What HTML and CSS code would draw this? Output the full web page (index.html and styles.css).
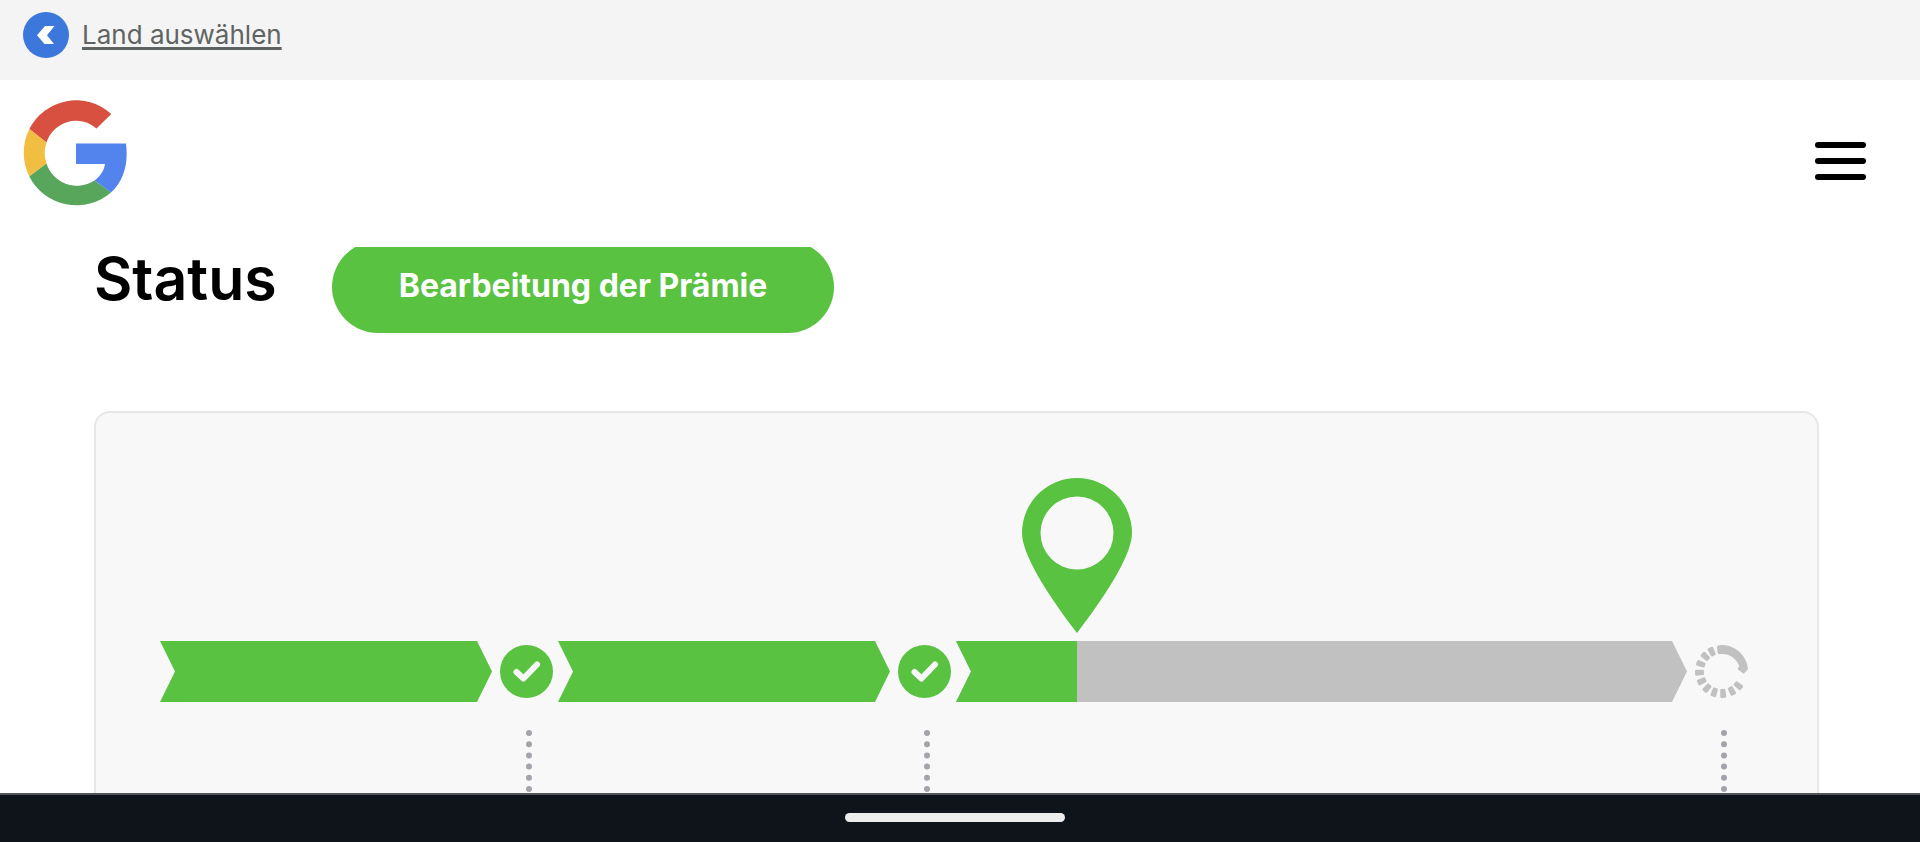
FILE: index.html
```
<!DOCTYPE html>
<html lang="de">
<head>
    <meta charset="UTF-8">
    <meta name="viewport" content="width=device-width, initial-scale=1.0">
    <title>Status</title>
    <link rel="stylesheet" href="styles.css">
</head>
<body>
    <div class="country-bar">
        <a href="#" class="country-link">
            <svg class="back-icon" viewBox="0 0 46 46" aria-hidden="true">
                <circle cx="23" cy="23" r="23" fill="#3c77dc"/>
                <path d="M22 14H31.500L24 23.200L31 32H21.500L14 23.200Z" fill="#fff"/>
            </svg>
            <span>Land auswählen</span>
        </a>
    </div>

    <header class="header">
        <a href="#" class="logo" aria-label="Google">
            <svg viewBox="0 0 104 106" aria-hidden="true">
                <path d="M6.300 29.500A52.500 52.800 0 0 1 88.300 14.500L73.500 29A31 31 0 0 0 23.500 43Z" fill="#d8503f"/>
                <path d="M6.300 29.500L23.500 43A32 32 0 0 0 23.500 64L6.300 77A53.500 53.500 0 0 1 6.300 29.500Z" fill="#f1be42"/>
                <path d="M6.300 77L23.500 64A32 32 0 0 0 71.500 81L88 93A53 53 0 0 1 6.300 77Z" fill="#58a55c"/>
                <path d="M53 44H103C105.500 64 101 81 88 93L71.500 81C77.500 76.500 81 71 82 64.500H53Z" fill="#5383ec"/>
            </svg>
        </a>
        <button type="button" class="menu-button" aria-label="Menü">
            <span></span>
            <span></span>
            <span></span>
        </button>
    </header>

    <main class="content">
        <div class="status-row">
            <h1>Status</h1>
            <span class="status-pill">Bearbeitung der Prämie</span>
        </div>

        <section class="progress-card">
            <div class="progress">
                <div class="segment done"></div>
                <svg class="step-icon" viewBox="0 0 53 53" role="img" aria-label="Erledigt">
                    <circle cx="26.500" cy="26.500" r="26.500" fill="#59c240"/>
                    <path d="M16.500 27L23.500 33.500L37 19.500" fill="none" stroke="#f8f8f8" stroke-width="6" stroke-linecap="round" stroke-linejoin="round"/>
                </svg>
                <div class="segment done next"></div>
                <svg class="step-icon" viewBox="0 0 53 53" role="img" aria-label="Erledigt">
                    <circle cx="26.500" cy="26.500" r="26.500" fill="#59c240"/>
                    <path d="M16.500 27L23.500 33.500L37 19.500" fill="none" stroke="#f8f8f8" stroke-width="6" stroke-linecap="round" stroke-linejoin="round"/>
                </svg>
                <div class="current next">
                    <div class="segment">
                        <div class="fill" style="width: 16.6%"></div>
                    </div>
                    <svg class="pin" style="left: 16.6%" viewBox="0 0 110 155" aria-hidden="true">
                        <path fill-rule="evenodd" d="M55 0A55 55 0 0 1 110 55C110 75 88 112 55 155C22 112 0 75 0 55A55 55 0 0 1 55 0ZM55 18.500A36.500 36.500 0 1 0 55 91.500A36.500 36.500 0 1 0 55 18.500Z" fill="#59c240"/>
                    </svg>
                </div>
                <svg class="step-icon" viewBox="0 0 53 53" role="img" aria-label="Ausstehend">
                    <path d="M24 0.200Q25 0 26.500 0A26.500 26.500 0 0 1 52 19L53 24L48.700 28.700L42.300 24L44.300 21.500A18 18 0 0 0 26.500 9L24 9.200Q22.800 9 22.500 7L22 2Q22.200 0.400 24 0.200Z" fill="#c1c1c1"/>
                    <g fill="#c1c1c1">
                        <path id="tick" d="M25 44H28Q29 44 29.100 45L29.500 51.500Q29.500 53 28 53H25Q23.500 53 23.500 51.500L23.900 45Q24 44 25 44Z" transform="rotate(-50 26.500 26.500)"/>
                        <use href="#tick" transform="rotate(22 26.500 26.500)"/>
                        <use href="#tick" transform="rotate(46 26.500 26.500)"/>
                        <use href="#tick" transform="rotate(69 26.500 26.500)"/>
                        <use href="#tick" transform="rotate(91 26.500 26.500)"/>
                        <use href="#tick" transform="rotate(114 26.500 26.500)"/>
                        <use href="#tick" transform="rotate(137 26.500 26.500)"/>
                        <use href="#tick" transform="rotate(160 26.500 26.500)"/>
                        <use href="#tick" transform="rotate(183 26.500 26.500)"/>
                        <use href="#tick" transform="rotate(204 26.500 26.500)"/>
                    </g>
                </svg>

                <!-- dotted connectors down to the step labels -->
                <svg class="dots first" viewBox="0 0 6 160" aria-hidden="true">
                    <path d="M3 3V160" stroke="#a3a3ab" stroke-width="6" stroke-linecap="round" stroke-dasharray="0 11.200"/>
                </svg>
                <svg class="dots second" viewBox="0 0 6 160" aria-hidden="true">
                    <path d="M3 3V160" stroke="#a3a3ab" stroke-width="6" stroke-linecap="round" stroke-dasharray="0 11.200"/>
                </svg>
                <svg class="dots third" viewBox="0 0 6 160" aria-hidden="true">
                    <path d="M3 3V160" stroke="#a3a3ab" stroke-width="6" stroke-linecap="round" stroke-dasharray="0 11.200"/>
                </svg>
            </div>
        </section>
    </main>

    <div class="system-bar">
        <div class="handle"></div>
    </div>
</body>
</html>
```
FILE: styles.css
```
* {
    box-sizing: border-box;
}
body {
    display: flex;
    flex-direction: column;
    height: 100vh;
    margin: 0;
    font-family: Inter, 'Open Sans', sans-serif;
    background-color: #fff;
    color: #000;
    overflow: hidden;
}
.country-bar {
    flex: none;
    height: 80px;
    padding: 12px 23px;
    background-color: #f4f4f4;
}
.country-link {
    display: inline-flex;
    align-items: center;
    gap: 13px;
    font-size: 26px;
    line-height: 44px;
    color: #5f6362;
    text-decoration: none;
}
.country-link span {
    text-decoration: underline;
    text-decoration-thickness: 3px;
    text-underline-offset: 3px;
    text-decoration-skip-ink: none;
}
.back-icon {
    width: 46px;
    height: 46px;
}
.header {
    display: flex;
    flex: none;
    justify-content: space-between;
    align-items: flex-start;
    height: 167px;
    padding: 19px 54px 0 23px;
}
.logo svg {
    display: block;
    width: 104px;
    height: 107px;
}
.menu-button {
    display: flex;
    flex-direction: column;
    gap: 10px;
    width: 51px;
    margin-top: 43px;
    padding: 0;
    border: none;
    background: none;
    cursor: pointer;
}
.menu-button span {
    width: 100%;
    height: 6px;
    border-radius: 3px;
    background-color: #000;
}
.content {
    flex: 1;
    min-height: 0;
    padding: 0 101px 0 94px;
    overflow: hidden;
}
.status-row {
    display: flex;
    align-items: flex-start;
    gap: 55px;
}
h1 {
    margin: 0;
    font-size: 59px;
    font-weight: 600;
    line-height: 64px;
}
/* top of the pill is scrolled under the header */
.status-pill {
    margin-top: -6px;
    padding: 21px 67px 23px;
    border-radius: 46px;
    background-color: #59c240;
    font-size: 32px;
    font-weight: 700;
    line-height: 48px;
    color: #fff;
}
.progress-card {
    margin-top: 78px;
    padding: 228px 69px 60px 64px;
    border: 2px solid #e7e7e7;
    border-radius: 16px;
    background-color: #f8f8f8;
}
.progress {
    display: grid;
    grid-template-columns: 332fr 53px 329fr 53px 728fr 53px;
    column-gap: 8px;
    row-gap: 28px;
    align-items: center;
}
.segment {
    height: 61px;
    background-color: #c1c1c1;
    clip-path: polygon(0 0, calc(100% - 15px) 0, 100% 50%, calc(100% - 15px) 100%, 0 100%, 15px 50%);
}
.segment.done,
.fill {
    background-color: #59c240;
}
.next {
    margin-left: -3px;
}
.fill {
    height: 100%;
}
.step-icon {
    width: 53px;
    height: 53px;
}
.current {
    position: relative;
}
.pin {
    position: absolute;
    bottom: 100%;
    width: 110px;
    height: 155px;
    margin-bottom: 8px;
    transform: translateX(-50%);
}
.dots {
    justify-self: center;
    width: 6px;
    height: 160px;
    margin-left: 4px;
}
.first {
    grid-column: 2;
}
.second {
    grid-column: 4;
}
.third {
    grid-column: 6;
}
.system-bar {
    display: flex;
    flex: none;
    justify-content: center;
    height: 49px;
    padding: 18px 10px 0 0;
    border-top: 2px solid #4f5655;
    background-color: #0f141b;
}
.handle {
    width: 220px;
    height: 9px;
    border-radius: 5px;
    background-color: #ececec;
}
```
